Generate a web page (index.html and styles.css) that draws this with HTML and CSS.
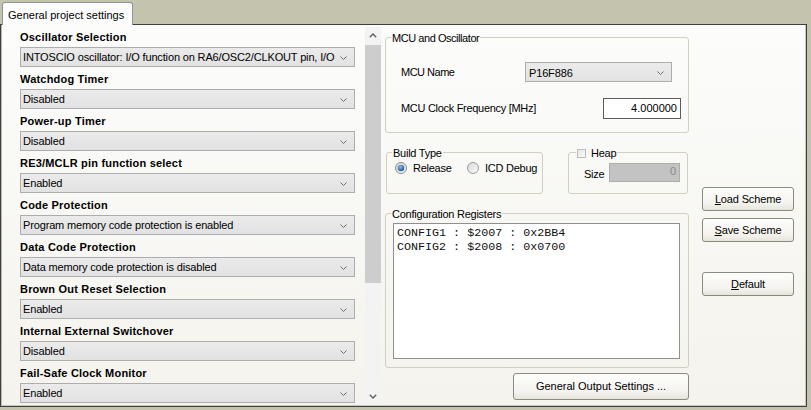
FILE: index.html
```html
<!DOCTYPE html>
<html>
<head>
<meta charset="utf-8">
<link rel="stylesheet" href="styles.css">
</head>
<body>
<div class="tabstrip"><div class="tab">General project settings</div></div>
<div class="panel">
  <div class="list">
    <div class="lbl">Oscillator Selection</div>
    <div class="combo"><span class="ctext">INTOSCIO oscillator: I/O function on RA6/OSC2/CLKOUT pin, I/O</span><svg class="chev" width="7" height="4" viewBox="0 0 7 4"><path d="M0.5 0.5 L3.5 3.5 L6.5 0.5" fill="none" stroke="#6d6d6d"/></svg></div>
    <div class="lbl">Watchdog Timer</div>
    <div class="combo"><span class="ctext">Disabled</span><svg class="chev" width="7" height="4" viewBox="0 0 7 4"><path d="M0.5 0.5 L3.5 3.5 L6.5 0.5" fill="none" stroke="#6d6d6d"/></svg></div>
    <div class="lbl">Power-up Timer</div>
    <div class="combo"><span class="ctext">Disabled</span><svg class="chev" width="7" height="4" viewBox="0 0 7 4"><path d="M0.5 0.5 L3.5 3.5 L6.5 0.5" fill="none" stroke="#6d6d6d"/></svg></div>
    <div class="lbl">RE3/MCLR pin function select</div>
    <div class="combo"><span class="ctext">Enabled</span><svg class="chev" width="7" height="4" viewBox="0 0 7 4"><path d="M0.5 0.5 L3.5 3.5 L6.5 0.5" fill="none" stroke="#6d6d6d"/></svg></div>
    <div class="lbl">Code Protection</div>
    <div class="combo"><span class="ctext">Program memory code protection is enabled</span><svg class="chev" width="7" height="4" viewBox="0 0 7 4"><path d="M0.5 0.5 L3.5 3.5 L6.5 0.5" fill="none" stroke="#6d6d6d"/></svg></div>
    <div class="lbl">Data Code Protection</div>
    <div class="combo"><span class="ctext">Data memory code protection is disabled</span><svg class="chev" width="7" height="4" viewBox="0 0 7 4"><path d="M0.5 0.5 L3.5 3.5 L6.5 0.5" fill="none" stroke="#6d6d6d"/></svg></div>
    <div class="lbl">Brown Out Reset Selection</div>
    <div class="combo"><span class="ctext">Enabled</span><svg class="chev" width="7" height="4" viewBox="0 0 7 4"><path d="M0.5 0.5 L3.5 3.5 L6.5 0.5" fill="none" stroke="#6d6d6d"/></svg></div>
    <div class="lbl">Internal External Switchover</div>
    <div class="combo"><span class="ctext">Disabled</span><svg class="chev" width="7" height="4" viewBox="0 0 7 4"><path d="M0.5 0.5 L3.5 3.5 L6.5 0.5" fill="none" stroke="#6d6d6d"/></svg></div>
    <div class="lbl">Fail-Safe Clock Monitor</div>
    <div class="combo"><span class="ctext">Enabled</span><svg class="chev" width="7" height="4" viewBox="0 0 7 4"><path d="M0.5 0.5 L3.5 3.5 L6.5 0.5" fill="none" stroke="#6d6d6d"/></svg></div>
  </div>

  <div class="scrollbar">
    <div class="sbtn"><svg width="8" height="5" viewBox="0 0 8 5"><path d="M0.8 4.2 L4 1 L7.2 4.2" fill="none" stroke="#5f5f5f" stroke-width="1.4"/></svg></div>
    <div class="thumb"></div>
    <div class="track"></div>
    <div class="sbtn"><svg width="8" height="5" viewBox="0 0 8 5"><path d="M0.8 0.8 L4 4 L7.2 0.8" fill="none" stroke="#5f5f5f" stroke-width="1.4"/></svg></div>
  </div>

  <div class="right">
    <fieldset class="grp mcu">
      <legend class="tight">MCU and Oscillator</legend>
      <div class="frow">
        <div class="flabel name">MCU Name</div>
        <div class="combo mcucombo"><span class="ctext">P16F886</span><svg class="chev" width="7" height="4" viewBox="0 0 7 4"><path d="M0.5 0.5 L3.5 3.5 L6.5 0.5" fill="none" stroke="#6d6d6d"/></svg></div>
      </div>
      <div class="frow second">
        <div class="flabel freq">MCU Clock Frequency [MHz]</div>
        <div class="edit">4.000000</div>
      </div>
    </fieldset>

    <div class="midrow">
      <fieldset class="grp build">
        <legend>Build Type</legend>
        <div class="radios">
          <div class="radio first">
            <svg width="12" height="12" viewBox="0 0 12 12">
              <defs>
                <radialGradient id="rsel" cx="0.4" cy="0.35" r="0.7"><stop offset="0" stop-color="#8fbde8"/><stop offset="1" stop-color="#1b4f8a"/></radialGradient>
                <linearGradient id="rbg" x1="0" y1="0" x2="1" y2="1"><stop offset="0" stop-color="#d8d8d8"/><stop offset="1" stop-color="#fbfbfb"/></linearGradient>
              </defs>
              <circle cx="6" cy="6" r="5.5" fill="url(#rbg)" stroke="#8c8c8c"/>
              <circle cx="6" cy="6" r="3.3" fill="url(#rsel)"/>
            </svg>
            <span>Release</span>
          </div>
          <div class="radio">
            <svg width="12" height="12" viewBox="0 0 12 12">
              <circle cx="6" cy="6" r="5.5" fill="url(#rbg)" stroke="#9a9a9a"/>
            </svg>
            <span>ICD Debug</span>
          </div>
        </div>
      </fieldset>
      <fieldset class="grp heap">
        <legend><span class="chk"></span>Heap</legend>
        <div class="heaprow">
          <div class="flabel">Size</div>
          <div class="edit disabled">0</div>
        </div>
      </fieldset>
    </div>

    <fieldset class="grp config">
      <legend>Configuration Registers</legend>
      <div class="memo">CONFIG1 : $2007 : 0x2BB4<br>CONFIG2 : $2008 : 0x0700</div>
    </fieldset>

    <div class="btn outbtn">General Output Settings ...</div>
  </div>

  <div class="btncol">
    <div class="btn"><span><u>L</u>oad Scheme</span></div>
    <div class="btn save"><span><u>S</u>ave Scheme</span></div>
    <div class="btn def"><span><u>D</u>efault</span></div>
  </div>
</div>
</body>
</html>
```
FILE: styles.css
```css
* { box-sizing: border-box; }

body {
  margin: 0;
  width: 811px;
  height: 410px;
  overflow: hidden;
  background: #c4c3ae;
  font-family: "Liberation Sans", Arial, sans-serif;
  font-size: 11px;
  color: #000;
}

.tabstrip {
  height: 24px;
  padding: 2px 0 0 2px;
  display: flex;
}

.tab {
  position: relative;
  z-index: 1;
  width: 131px;
  height: 23px;
  margin-bottom: -1px;
  padding: 6px 0 0 5px;
  line-height: 13px;
  background: #fcfcfc;
  border: 1px solid #8e9596;
  border-bottom: none;
  border-radius: 3px 3px 0 0;
  white-space: nowrap;
}

.panel {
  width: 807px;
  height: 383px;
  border: 1px solid #3f3f3f;
  box-shadow: inset 1px 0 0 #b9b9b0, inset -1px -1px 0 #c9c8bc;
  background: linear-gradient(#fcfcfb, #f4f3ed);
  display: flex;
  padding-left: 19px;
}

/* left list */
.list {
  width: 335px;
  height: 381px;
  overflow: hidden;
  display: flex;
  flex-direction: column;
  flex: none;
}

.lbl {
  height: 22px;
  padding-top: 6px;
  line-height: 13px;
  font-weight: bold;
  letter-spacing: 0.2px;
  white-space: nowrap;
  flex: none;
}

.combo {
  height: 20px;
  flex: none;
  display: flex;
  align-items: flex-start;
  border: 1px solid #adadad;
  background: linear-gradient(#ebebeb, #e2e2e2);
  padding-left: 2px;
  overflow: hidden;
}

.ctext {
  flex: 1;
  min-width: 0;
  padding-top: 3px;
  line-height: 13px;
  letter-spacing: -0.15px;
  white-space: nowrap;
  overflow: hidden;
}

.chev {
  flex: none;
  align-self: center;
  margin: 1px 7px 0 2px;
}

/* scrollbar */
.scrollbar {
  width: 16px;
  height: 378px;
  margin: 2px 0 0 10px;
  background: #f3f3f3;
  display: flex;
  flex-direction: column;
  flex: none;
}

.sbtn {
  height: 17px;
  display: flex;
  align-items: center;
  justify-content: center;
  flex: none;
}

.thumb {
  height: 238px;
  margin-top: 1px;
  background: #cdcdcd;
  flex: none;
}

.track { flex: 1; }

/* right column */
.right {
  width: 304px;
  margin-left: 4px;
  display: flex;
  flex-direction: column;
  flex: none;
  letter-spacing: -0.25px;
}

.grp {
  margin: 0;
  min-width: 0;
  padding-left: 0;
  padding-right: 0;
  border: 1px solid #d0d0bf;
  border-radius: 3px;
}

legend {
  padding: 2px 1px 0;
  margin-left: 5px;
  line-height: 13px;
  white-space: nowrap;
}

legend.tight { letter-spacing: -0.45px; }

.mcu {
  margin-top: 5px;
  padding-top: 17px;
  padding-bottom: 14px;
}

.frow {
  display: flex;
  height: 20px;
  margin-left: 15px;
}

.frow.second { margin-top: 16px; }

.flabel {
  padding-top: 4px;
  line-height: 13px;
  white-space: nowrap;
  flex: none;
}

.flabel.name { width: 124px; letter-spacing: -0.5px; }
.flabel.freq { width: 202px; letter-spacing: -0.3px; }

.mcucombo { width: 147px; padding-left: 3px; }
.mcucombo .ctext { padding-top: 4px; }

.edit {
  width: 78px;
  height: 21px;
  border: 1px solid #5c5c5c;
  background: #fff;
  text-align: right;
  padding: 3px 3px 0 0;
  line-height: 13px;
  letter-spacing: 0;
}

.midrow {
  display: flex;
  margin-top: 12px;
}

.build {
  width: 157px;
  margin-left: 1px;
  padding-top: 1px;
  padding-bottom: 19px;
}

.radios {
  display: flex;
  height: 13px;
  align-items: center;
  margin-left: 8px;
}

.radio {
  display: flex;
  align-items: center;
  gap: 6px;
}

.radio.first { width: 72px; }

.heap {
  width: 120px;
  margin-left: 25px;
  padding-top: 3px;
  padding-bottom: 11px;
}

.heap legend { margin-left: 7px; }

.chk {
  display: inline-block;
  width: 9px;
  height: 9px;
  border: 1px solid #bdbdbd;
  background: linear-gradient(135deg, #e6e6e6, #fafafa);
  margin-right: 5px;
  vertical-align: -1px;
}

.heaprow {
  display: flex;
  height: 19px;
  margin-left: 15px;
}

.heaprow .flabel { width: 25px; padding-top: 5px; }

.edit.disabled {
  width: 71px;
  height: 19px;
  border: 1px solid #aeaeae;
  background: #c3c3c3;
  color: #8a8a8a;
  padding: 1px 3px 0 0;
}

.config {
  margin-top: 12px;
  padding-top: 2px;
  padding-bottom: 8px;
}

.memo {
  height: 136px;
  margin: 0 8px 0 7px;
  border: 1px solid #8f8f8f;
  background: #fff;
  padding: 3px 3px;
  font-family: "Liberation Mono", "Courier New", monospace;
  font-size: 11.7px;
  line-height: 13.6px;
  letter-spacing: 0;
  color: #111;
  white-space: nowrap;
}

.btn {
  height: 24px;
  display: flex;
  align-items: center;
  justify-content: center;
  border: 1px solid #8a8a80;
  border-radius: 3px;
  background: linear-gradient(#fdfdfc, #f4f3ee 70%, #e6e4da);
  line-height: 13px;
  white-space: nowrap;
  flex: none;
}

.outbtn {
  width: 176px;
  height: 27px;
  margin: 5px 0 0 auto;
  letter-spacing: 0;
}

.btncol {
  width: 92px;
  margin-left: 13px;
  padding-top: 162px;
  display: flex;
  flex-direction: column;
  flex: none;
  letter-spacing: -0.15px;
}

.btn.save { margin-top: 7px; }
.btn.def { margin-top: 30px; }
```
